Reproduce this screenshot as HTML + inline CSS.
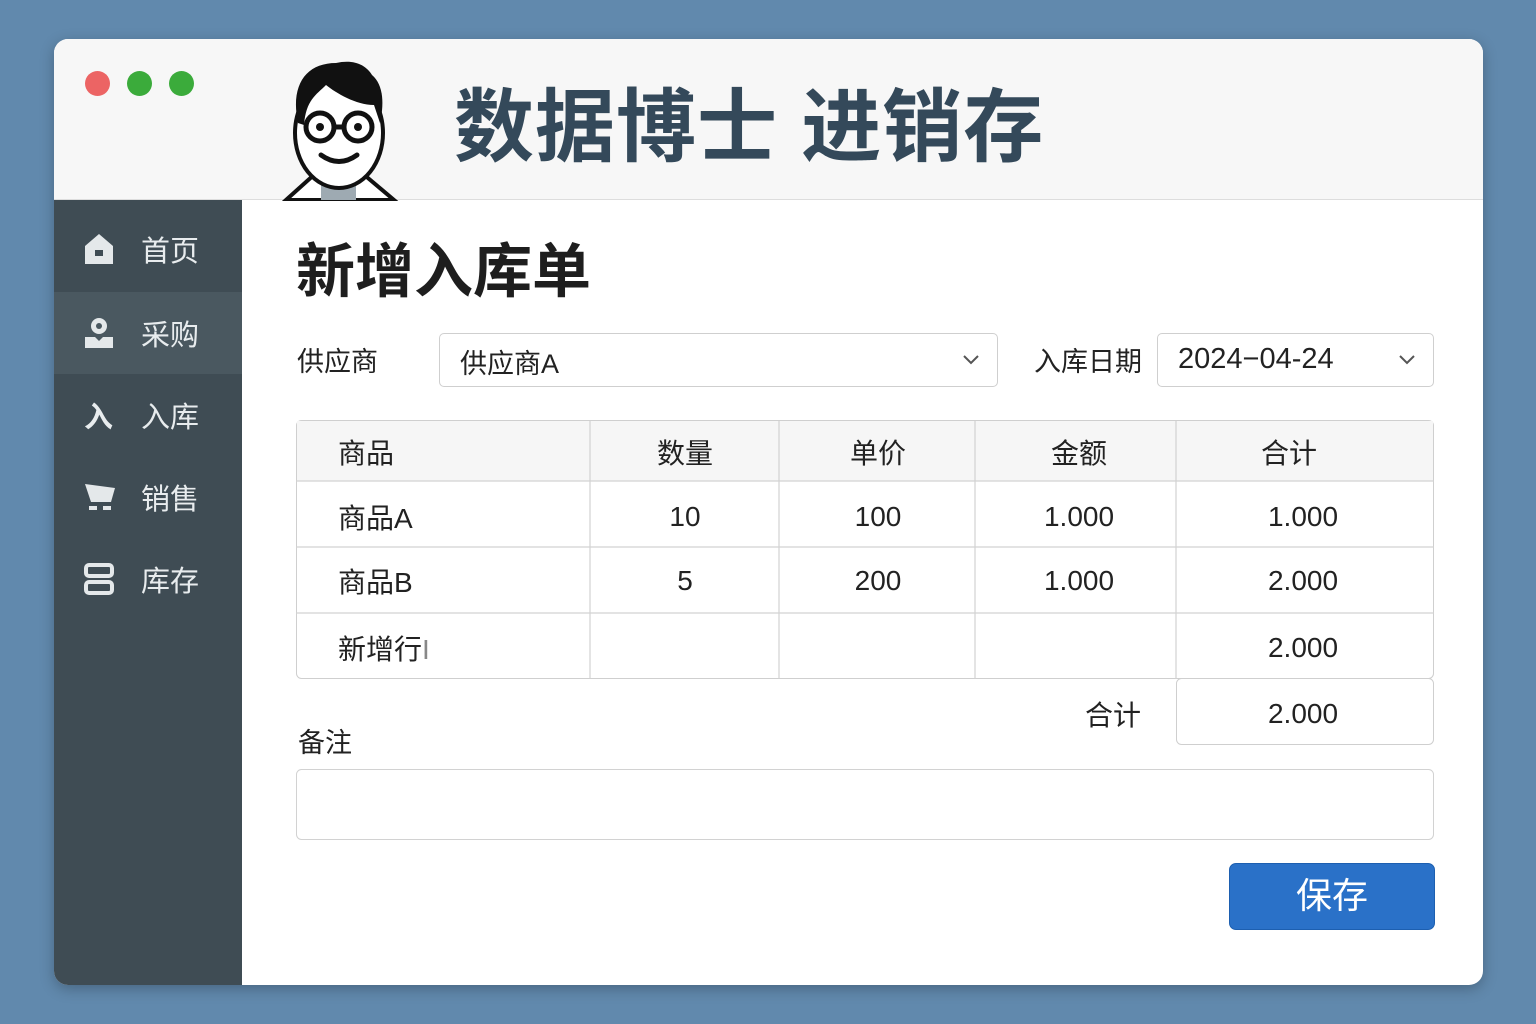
<!DOCTYPE html>
<html><head><meta charset="utf-8"><style>
*{margin:0;padding:0;box-sizing:border-box}
body{width:1536px;height:1024px;background:#6189ad;font-family:"Liberation Sans","Noto Sans CJK SC",sans-serif;position:relative;overflow:hidden}
.a{position:absolute}
.win{left:54px;top:39px;width:1429px;height:946px;border-radius:14px;background:#fff;overflow:hidden;box-shadow:0 4px 14px rgba(0,0,0,.25)}
.hdr{left:0;top:0;width:1429px;height:161px;background:#f7f7f7;border-bottom:1px solid #ddd}
.side{left:0;top:161px;width:188px;height:785px;background:#3f4c54}
.nav{position:absolute;left:0;width:188px;height:82px;color:#e8ecee;font-size:29px;display:flex;align-items:center}
.nav span{position:absolute;left:87px}
.ic{position:absolute;left:30px;top:50%;transform:translateY(-50%)}
.lbl{font-size:27px;color:#222}
.box{border:1px solid #cfcfcf;border-radius:5px;background:#fff}
.t{font-size:28px;color:#222;position:absolute;transform:translate(-50%,-50%)}
.tl{font-size:28px;color:#222;position:absolute;transform:translateY(-50%)}
</style></head><body>
<div class="a win">
 <div class="a hdr">
  <div class="a" style="left:31px;top:32px;width:25px;height:25px;border-radius:50%;background:#ec6464"></div>
  <div class="a" style="left:73px;top:32px;width:25px;height:25px;border-radius:50%;background:#3bab3b"></div>
  <div class="a" style="left:115px;top:32px;width:25px;height:25px;border-radius:50%;background:#3bab3b"></div>
  <svg class="a" style="left:222px;top:16px" width="126" height="146" viewBox="0 0 126 146">
   <path d="M10 145 L40 118 L86 118 L118 145 Z" fill="#fff" stroke="#111" stroke-width="4"/>
   <path d="M45 118 L63 135 L80 118 L80 145 L45 145Z" fill="#9eaab2"/>
   <ellipse cx="63" cy="78" rx="44" ry="55" fill="#fff" stroke="#111" stroke-width="4"/>
   <path d="M22 68 C14 30 30 8 60 8 C78 4 90 10 96 20 C108 30 108 50 104 68 L98 50 C80 50 60 38 50 30 C40 40 30 45 28 70Z" fill="#111"/>
   <circle cx="44" cy="72" r="14" fill="#fff" stroke="#111" stroke-width="5"/>
   <circle cx="82" cy="72" r="14" fill="#fff" stroke="#111" stroke-width="5"/>
   <path d="M58 72 L68 72" stroke="#111" stroke-width="5"/>
   <circle cx="44" cy="72" r="4" fill="#111"/><circle cx="82" cy="72" r="4" fill="#111"/>
   <path d="M45 100 Q63 113 81 100" fill="none" stroke="#111" stroke-width="5" stroke-linecap="round"/>
  </svg>
  <div class="a" style="left:400px;top:24px;font-size:80px;font-weight:bold;color:#34495a;letter-spacing:1px;white-space:nowrap">数据博士 进销存</div>
 </div>
 <div class="a side">
  <div class="nav" style="top:8px"><svg class="ic" width="30" height="32"><path d="M1 13 L15 1 L29 13 L29 31 L1 31Z" fill="#e4e8ea"/><rect x="11" y="17" width="8" height="6" fill="#3f4c54"/></svg><span>首页</span></div>
  <div class="nav" style="top:92px;background:#4a5860"><svg class="ic" width="30" height="32"><circle cx="15" cy="9" r="8" fill="#e4e8ea"/><circle cx="15" cy="9" r="3" fill="#4a5860"/><path d="M1 20 L11 20 L15 24 L19 20 L29 20 L29 31 L1 31Z" fill="#e4e8ea"/></svg><span>采购</span></div>
  <div class="nav" style="top:174px"><span style="left:30px;font-weight:bold">入</span><span>入库</span></div>
  <div class="nav" style="top:256px"><svg class="ic" width="32" height="30"><path d="M1 2 L31 6 L27 20 L7 20Z" fill="#e4e8ea"/><rect x="5" y="24" width="8" height="4" fill="#e4e8ea"/><rect x="19" y="24" width="8" height="4" fill="#e4e8ea"/></svg><span>销售</span></div>
  <div class="nav" style="top:338px"><svg class="ic" width="30" height="32"><rect x="2" y="2" width="26" height="11" rx="3" fill="none" stroke="#e4e8ea" stroke-width="4"/><rect x="2" y="19" width="26" height="11" rx="3" fill="none" stroke="#e4e8ea" stroke-width="4"/></svg><span>库存</span></div>
 </div>
</div>
<div class="a" style="left:296px;top:224px;font-size:59px;font-weight:bold;color:#1e1e1e">新增入库单</div>
<div class="a lbl" style="left:297px;top:340px">供应商</div>
<div class="a box" style="left:439px;top:333px;width:559px;height:54px"><div class="a" style="left:20px;top:8px;font-size:27px;color:#222">供应商A</div>
 <svg class="a" style="right:18px;top:21px" width="16" height="10"><path d="M1 1 L8 8 L15 1" fill="none" stroke="#555" stroke-width="2"/></svg></div>
<div class="a lbl" style="left:1034px;top:340px">入库日期</div>
<div class="a box" style="left:1157px;top:333px;width:277px;height:54px"><div class="a" style="left:20px;top:9px;font-size:29px;color:#222">2024−04-24</div>
 <svg class="a" style="right:18px;top:21px" width="16" height="10"><path d="M1 1 L8 8 L15 1" fill="none" stroke="#555" stroke-width="2"/></svg></div>
<svg class="a" style="left:0;top:0" width="1536" height="1024">
 <rect x="296.5" y="420.5" width="1137" height="258" rx="5" fill="#fff" stroke="#cfcfcf"/>
 <path d="M297 421 H1433 V481 H297Z" fill="#f6f6f6"/>
 <g stroke="#d2d2d2" stroke-width="1.2">
  <line x1="296" y1="481" x2="1434" y2="481"/><line x1="296" y1="547" x2="1434" y2="547"/><line x1="296" y1="613" x2="1434" y2="613"/>
  <line x1="590" y1="421" x2="590" y2="679"/><line x1="779" y1="421" x2="779" y2="679"/><line x1="975" y1="421" x2="975" y2="679"/><line x1="1176" y1="421" x2="1176" y2="679"/>
 </g>
 <rect x="1176.5" y="678.5" width="257" height="66" rx="5" fill="#fff" stroke="#cfcfcf"/>
 <rect x="296.5" y="769.5" width="1137" height="70" rx="5" fill="#fff" stroke="#d2d2d2"/>
</svg>
<div class="tl" style="left:338px;top:452px">商品</div>
<div class="t" style="left:685px;top:452px">数量</div>
<div class="t" style="left:878px;top:452px">单价</div>
<div class="t" style="left:1079px;top:452px">金额</div>
<div class="t" style="left:1289px;top:452px">合计</div>
<div class="tl" style="left:338px;top:517px">商品A</div>
<div class="t" style="left:685px;top:517px">10</div><div class="t" style="left:878px;top:517px">100</div><div class="t" style="left:1079px;top:517px">1.000</div><div class="t" style="left:1303px;top:517px">1.000</div>
<div class="tl" style="left:338px;top:581px">商品B</div>
<div class="t" style="left:685px;top:581px">5</div><div class="t" style="left:878px;top:581px">200</div><div class="t" style="left:1079px;top:581px">1.000</div><div class="t" style="left:1303px;top:581px">2.000</div>
<div class="tl" style="left:338px;top:648px">新增行<span style="color:#888;font-weight:200">I</span></div>
<div class="t" style="left:1303px;top:648px">2.000</div>
<div class="t" style="left:1113px;top:714px">合计</div>
<div class="t" style="left:1303px;top:714px">2.000</div>
<div class="a lbl" style="left:298px;top:721px">备注</div>
<div class="a" style="left:1229px;top:863px;width:206px;height:67px;background:#2a71c8;border-radius:7px;border:1px solid #1d5fb0;color:#fff;font-size:36px;text-align:center;line-height:64px">保存</div>
</body></html>
